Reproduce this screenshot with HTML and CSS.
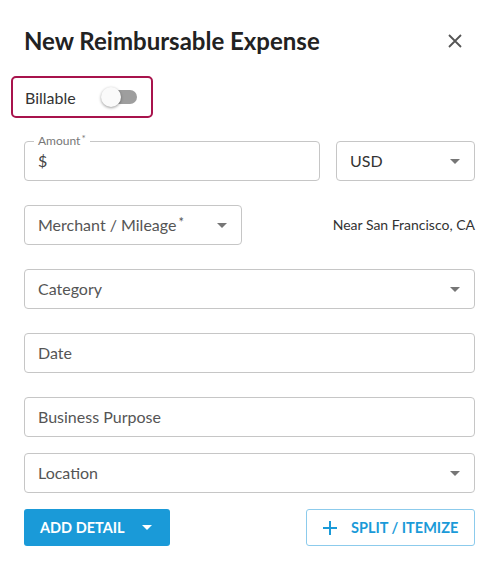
FILE: index.html
```html
<!DOCTYPE html>
<html lang="en">
<head>
<meta charset="utf-8">
<title>New Reimbursable Expense</title>
<link rel="stylesheet" href="styles.css">
</head>
<body>
<div class="dialog">
  <header class="dialog-header">
    <h1 class="dialog-title">New Reimbursable Expense</h1>
    <button class="close-btn" aria-label="Close">
      <svg width="14" height="14" viewBox="0 0 14 14"><path d="M1 1L13 13M13 1L1 13" stroke="#555" stroke-width="1.8" fill="none"/></svg>
    </button>
  </header>

  <div class="billable">
    <span class="billable-label">Billable</span>
    <span class="switch"><span class="switch-track"></span><span class="switch-knob"></span></span>
  </div>

  <div class="row">
    <div class="field field-amount">
      <span class="float-label">Amount<sup>*</sup></span>
      <span class="field-text">$</span>
    </div>
    <div class="field field-currency">
      <span class="field-text">USD</span>
      <span class="caret"></span>
    </div>
  </div>

  <div class="row row-merchant">
    <div class="field field-merchant">
      <span class="field-text">Merchant / Mileage<sup>*</sup></span>
      <span class="caret"></span>
    </div>
    <span class="near">Near San Francisco, CA</span>
  </div>

  <div class="field">
    <span class="field-text">Category</span>
    <span class="caret"></span>
  </div>

  <div class="field">
    <span class="field-text">Date</span>
  </div>

  <div class="field">
    <span class="field-text">Business Purpose</span>
  </div>

  <div class="field field-last">
    <span class="field-text">Location</span>
    <span class="caret"></span>
  </div>

  <div class="actions">
    <button class="btn btn-primary">ADD DETAIL <span class="caret caret-white"></span></button>
    <button class="btn btn-outline">
      <svg width="14" height="14" viewBox="0 0 14 14"><path d="M7 0V14M0 7H14" stroke="#1a9ad8" stroke-width="2" fill="none"/></svg>
      SPLIT / ITEMIZE
    </button>
  </div>
</div>
</body>
</html>
```

FILE: styles.css
```css
* { box-sizing: border-box; }

body {
  margin: 0;
  background: #fff;
  font-family: Lato, "Open Sans", sans-serif;
  color: #333;
}

.dialog {
  padding: 26px 22px 0 24px;
  display: flex;
  flex-direction: column;
}

.dialog-header {
  display: flex;
  align-items: center;
  justify-content: space-between;
  height: 30px;
}

.dialog-title {
  margin: 0;
  font-size: 24px;
  font-weight: 700;
  color: #222;
  line-height: 30px;
}

.close-btn {
  border: 0;
  background: none;
  padding: 0;
  margin-right: 13px;
  width: 14px;
  height: 14px;
  display: flex;
}

.billable {
  margin: 20px 0 0 -13px;
  width: 142px;
  height: 42px;
  border: 2px solid #a8134c;
  border-radius: 5px;
  display: flex;
  align-items: center;
  padding-left: 12px;
}

.billable-label {
  font-size: 16px;
  color: #333;
}

.switch {
  position: relative;
  margin-left: 25px;
  width: 36px;
  height: 20px;
  display: inline-block;
}

.switch-track {
  position: absolute;
  left: 2px;
  top: 3px;
  width: 34px;
  height: 14px;
  border-radius: 7px;
  background: #9e9e9e;
}

.switch-knob {
  position: absolute;
  left: 0;
  top: 0;
  width: 20px;
  height: 20px;
  border-radius: 50%;
  background: #fafafa;
  box-shadow: 0 1px 3px rgba(0,0,0,0.4);
}

.row {
  display: flex;
  align-items: center;
  gap: 16px;
  margin-top: 23px;
}

.row-merchant {
  margin-top: 24px;
  justify-content: space-between;
}

.field {
  position: relative;
  height: 40px;
  border: 1px solid #c6c6c6;
  border-radius: 4px;
  display: flex;
  align-items: center;
  padding: 0 13px 2px;
  margin-top: 24px;
}

.row .field { margin-top: 0; }

.field-amount { width: 296px; }
.field-currency { flex: 1; }
.field-merchant { width: 218px; }

.field-text {
  font-size: 16px;
  color: #555;
  flex: 1;
}

.field-text sup {
  font-size: 13px;
  line-height: 0;
  vertical-align: 4px;
  margin-left: 2px;
}

.field-currency .field-text { color: #333; }
.field-amount .field-text { color: #444; }

.float-label {
  position: absolute;
  left: 9px;
  top: -9px;
  padding: 0 4px;
  background: #fff;
  font-size: 12px;
  line-height: 15px;
  color: #777;
}

.float-label sup {
  font-size: 10px;
  line-height: 0;
  vertical-align: 3px;
  margin-left: 1px;
}

.caret {
  width: 0;
  height: 0;
  border-left: 5px solid transparent;
  border-right: 5px solid transparent;
  border-top: 5px solid #767676;
  margin: 2px 1px 0 0;
}

.near {
  font-size: 14px;
  color: #333;
  margin-top: -2px;
}

.field-last { margin-top: 16px; }

.actions {
  display: flex;
  justify-content: space-between;
  margin-top: 16px;
}

.btn {
  height: 37px;
  border-radius: 3px;
  font-family: Lato, "Open Sans", sans-serif;
  font-size: 14.5px;
  font-weight: 700;
  display: flex;
  align-items: center;
  cursor: pointer;
}

.btn-primary {
  width: 146px;
  background: #1a9ad8;
  color: #fff;
  border: 0;
  padding: 0 0 0 16px;
  gap: 17px;
}

.caret-white { border-top-color: #fff; margin: 0; }

.btn-outline {
  width: 169px;
  background: #fff;
  border: 1px solid #8ccbec;
  color: #1a9ad8;
  padding: 0 0 0 16px;
  gap: 14px;
}
```
